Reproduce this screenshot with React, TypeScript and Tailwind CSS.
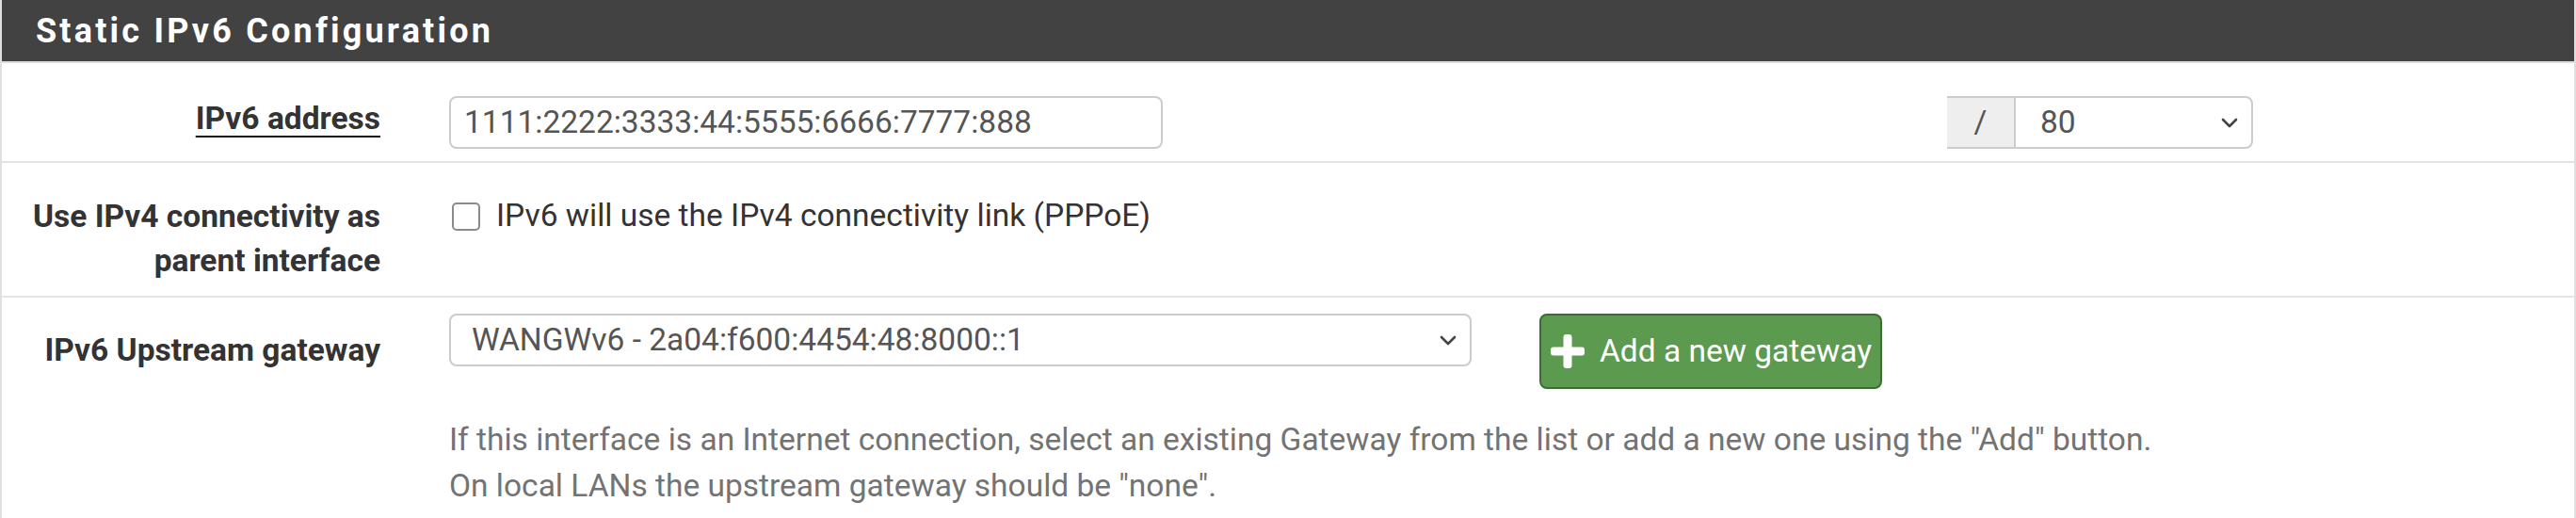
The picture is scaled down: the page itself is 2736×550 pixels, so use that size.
import React from 'react';

const Chevron = () => (
  <svg width="18" height="11" viewBox="0 0 18 11" fill="none" stroke="#444" strokeWidth="2.6" strokeLinecap="round" strokeLinejoin="round">
    <path d="M2 2l7 7 7-7" />
  </svg>
);

const PlusIcon = () => (
  <svg width="36" height="36" viewBox="0 0 36 36" fill="#fff">
    <rect x="13.5" y="0" width="9" height="36" rx="3" />
    <rect x="0" y="13.5" width="36" height="9" rx="3" />
  </svg>
);

export default function App() {
  return (
    <div className="w-[2736px] bg-white font-[Roboto,sans-serif] text-[33.5px] text-[#333]">
      <div className="min-h-[550px] border-x-2 border-[#e0e0e0]">
        {/* Panel heading */}
        <div className="flex h-[67px] items-center border-b-2 border-[#dddddd] bg-[#424242] pl-[36px]">
          <h2 className="text-[36px] font-bold tracking-[3.2px] text-white">Static IPv6 Configuration</h2>
        </div>

        {/* IPv6 address */}
        <div className="flex items-start border-b-2 border-[#e4e4e4] pt-[35px] pb-[13px]">
          <div className="w-[402px] shrink-0 text-right font-bold leading-[47px]">
            <span className="underline decoration-[#111] decoration-2 underline-offset-[7px]">IPv6 address</span>
          </div>
          <div className="ml-[73px] flex h-[56px] w-[758px] items-center rounded-[8px] border-2 border-[#cccccc] px-[14px] text-[#555]">
            1111:2222:3333:44:5555:6666:7777:888
          </div>
          <div className="ml-[833px] flex h-[56px]">
            <div className="flex w-[71px] items-center justify-center border-y-2 border-[#cccccc] bg-[#eeeeee] text-[#555]">/</div>
            <div className="flex w-[254px] items-center justify-between rounded-r-[8px] border-2 border-[#cccccc] pl-[26px] pr-[14px] text-[#555]">
              <span>80</span>
              <Chevron />
            </div>
          </div>
        </div>

        {/* Use IPv4 connectivity */}
        <div className="flex items-start border-b-2 border-[#e4e4e4] pt-[33px] pb-[14px]">
          <div className="w-[402px] shrink-0 text-right font-bold leading-[47px]">
            Use IPv4 connectivity as
            <br />
            parent interface
          </div>
          <div className="ml-[76px] flex h-[47px] items-center">
            <div className="h-[30px] w-[30px] rounded-[5px] border-2 border-[#8a8a90] bg-white" />
            <span className="ml-[17px]">IPv6 will use the IPv4 connectivity link (PPPoE)</span>
          </div>
        </div>

        {/* IPv6 Upstream gateway */}
        <div className="flex items-start pt-[17px]">
          <div className="mt-[15px] w-[402px] shrink-0 text-right font-bold leading-[47px]">IPv6 Upstream gateway</div>
          <div className="ml-[73px] flex flex-col">
            <div className="flex items-start">
              <div className="flex h-[56px] w-[1086px] items-center justify-between rounded-[8px] border-2 border-[#cccccc] pl-[22px] pr-[14px] text-[#555]">
                <span>WANGWv6 - 2a04:f600:4454:48:8000::1</span>
                <Chevron />
              </div>
              <button
                type="button"
                className="ml-[72px] flex h-[80px] w-[364px] items-center rounded-[8px] border-2 border-[#3d6b35] bg-[#5c9a4f] pl-[10px] text-white"
              >
                <PlusIcon />
                <span className="ml-[16px]">Add a new gateway</span>
              </button>
            </div>
            <div className="mt-[29px] leading-[49px] text-[#737373]">
              If this interface is an Internet connection, select an existing Gateway from the list or add a new one using the "Add" button.
              <br />
              On local LANs the upstream gateway should be "none".
            </div>
          </div>
        </div>
      </div>
    </div>
  );
}
